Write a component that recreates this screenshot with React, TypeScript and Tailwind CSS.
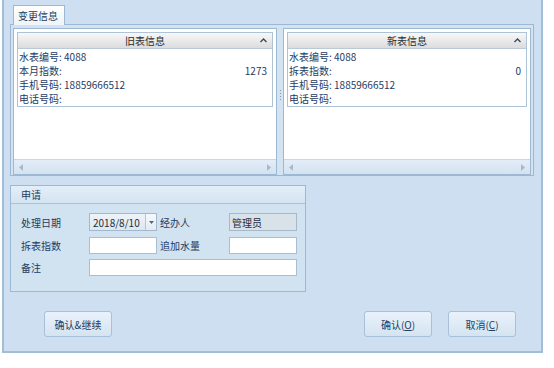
import React from "react";

function Caret() {
  return (
    <svg width="7" height="5" viewBox="0 0 7 5" className="block">
      <path d="M0.5 4 L3.5 1 L6.5 4" fill="none" stroke="#3a4a5a" strokeWidth="1.4" />
    </svg>
  );
}

function ScrollBar() {
  return (
    <div className="h-[15px] flex items-center justify-between px-[5px] bg-gradient-to-b from-[#e3edf7] to-[#d4e3f1] border-t border-[#c6d7e8]">
      <svg width="4" height="7" viewBox="0 0 4 7" className="block">
        <path d="M4 0 L0 3.5 L4 7 Z" fill="#a9b9ca" />
      </svg>
      <svg width="4" height="7" viewBox="0 0 4 7" className="block">
        <path d="M0 0 L4 3.5 L0 7 Z" fill="#a9b9ca" />
      </svg>
    </div>
  );
}

type Row = { label: string; value?: string; right?: string };

function InfoPanel({ title, rows, width }: { title: string; rows: Row[]; width: string }) {
  return (
    <div className={`${width} h-[147px] border border-[#9db8d2] bg-white flex flex-col`}>
      <div className="flex-1 p-[3px] pb-0">
        <div className="border border-[#aec3d6] flex flex-col">
          <div className="h-[16px] border-b border-[#b9c9d8] bg-gradient-to-b from-[#f8f8f8] to-[#dcdcdc] flex items-center relative">
            <div className="flex-1 text-center text-[#2b2b2b] leading-none">{title}</div>
            <div className="absolute right-[5px] top-[5px]">
              <Caret />
            </div>
          </div>
          <div className="pt-[1px]">
            {rows.map((r, i) => (
              <div key={i} className="h-[14px] flex items-center justify-between pl-[1px] pr-[5px] leading-none">
                <span>
                  {r.label}
                  {r.value ? <span> {r.value}</span> : null}
                </span>
                {r.right ? <span>{r.right}</span> : null}
              </div>
            ))}
          </div>
        </div>
      </div>
      <ScrollBar />
    </div>
  );
}

function Btn({ children }: { children: React.ReactNode }) {
  return (
    <div className="w-[68px] h-[26px] rounded-[3px] border border-[#a9c1d8] bg-gradient-to-b from-[#e9f2fb] to-[#d5e4f2] flex items-center justify-center text-[#24405f]">
      {children}
    </div>
  );
}

export default function App() {
  return (
    <div className="w-[554px] h-[368px] bg-white overflow-hidden font-['Noto_Sans_CJK_SC','Liberation_Sans',sans-serif] text-[10px] text-[#1f3b5f]">
      <div className="ml-[2px] w-[541px] h-[353px] bg-[#cddff0] border-x-2 border-b-2 border-[#a2bdd6] flex flex-col">
        {/* tab strip */}
        <div className="pl-[9px] pt-[5px] flex">
          <div className="w-[52px] h-[20px] border border-b-0 border-[#9db8d2] bg-gradient-to-b from-[#ffffff] to-[#eef4fa] flex items-center pl-[4px] text-[#2a3a4c] relative z-10">
            变更信息
          </div>
        </div>
        {/* tab page */}
        <div className="ml-[6px] -mt-px w-[524px] h-[152px] border border-[#9db8d2] bg-[#d3e3f2] pt-[3px] px-[2px] flex">
          <InfoPanel
            title="旧表信息"
            width="w-[264px]"
            rows={[
              { label: "水表编号:", value: "4088" },
              { label: "本月指数:", right: "1273" },
              { label: "手机号码:", value: "18859666512" },
              { label: "电话号码:" },
            ]}
          />
          <div className="w-[6px] flex flex-col items-center pt-[62px] gap-[2px]">
            <div className="w-px h-px bg-[#7d98b4]" />
            <div className="w-px h-px bg-[#7d98b4]" />
            <div className="w-px h-px bg-[#7d98b4]" />
            <div className="w-px h-px bg-[#7d98b4]" />
          </div>
          <InfoPanel
            title="新表信息"
            width="w-[248px]"
            rows={[
              { label: "水表编号:", value: "4088" },
              { label: "拆表指数:", right: "0" },
              { label: "手机号码:", value: "18859666512" },
              { label: "电话号码:" },
            ]}
          />
        </div>
        {/* group 申请 */}
        <div className="ml-[6px] mt-[9px] w-[296px] h-[107px] border border-[#9db8d2] bg-[#d1e2f1] flex flex-col">
          <div className="h-[18px] border-b border-[#a9c1d8] bg-gradient-to-b from-[#e4eef8] to-[#d4e4f2] flex items-center pl-[10px] text-[#24405f]">
            申请
          </div>
          <div className="pl-[10px] pt-[9px] flex flex-col">
            <div className="flex items-center h-[18px]">
              <div className="w-[68px]">处理日期</div>
              <div className="w-[68px] h-[18px] border border-[#a3b8cc] bg-gradient-to-b from-[#eef3f8] to-[#dde7f0] flex items-stretch">
                <div className="flex-1 flex items-center pl-[3px] text-[#1e2e40]">2018/8/10</div>
                <div className="w-[11px] border-l border-[#b5c6d6] bg-gradient-to-b from-[#f6f9fc] to-[#e3ebf3] flex items-center justify-center">
                  <svg width="5" height="3" viewBox="0 0 5 3" className="block">
                    <path d="M0 0 L5 0 L2.5 3 Z" fill="#55667a" />
                  </svg>
                </div>
              </div>
              <div className="w-[72px] pl-[3px]">经办人</div>
              <div className="w-[68px] h-[18px] border border-[#a7b8c8] bg-[#d9e1e9] flex items-center pl-[2px] text-[#1e2e40]">
                管理员
              </div>
            </div>
            <div className="flex items-center h-[17px] mt-[6px]">
              <div className="w-[68px]">拆表指数</div>
              <div className="w-[68px] h-[17px] border border-[#a9bed3] bg-white" />
              <div className="w-[72px] pl-[3px]">追加水量</div>
              <div className="w-[68px] h-[17px] border border-[#a9bed3] bg-white" />
            </div>
            <div className="flex items-center h-[17px] mt-[5px]">
              <div className="w-[68px]">备注</div>
              <div className="w-[208px] h-[17px] border border-[#a9bed3] bg-white" />
            </div>
          </div>
        </div>
        {/* buttons */}
        <div className="mt-[19px] flex items-center pl-[40px] pr-[25px]">
          <Btn>确认&amp;继续</Btn>
          <div className="flex-1" />
          <Btn>
            确认(<span className="underline">O</span>)
          </Btn>
          <div className="w-[16px]" />
          <Btn>
            取消(<span className="underline">C</span>)
          </Btn>
        </div>
      </div>
    </div>
  );
}
